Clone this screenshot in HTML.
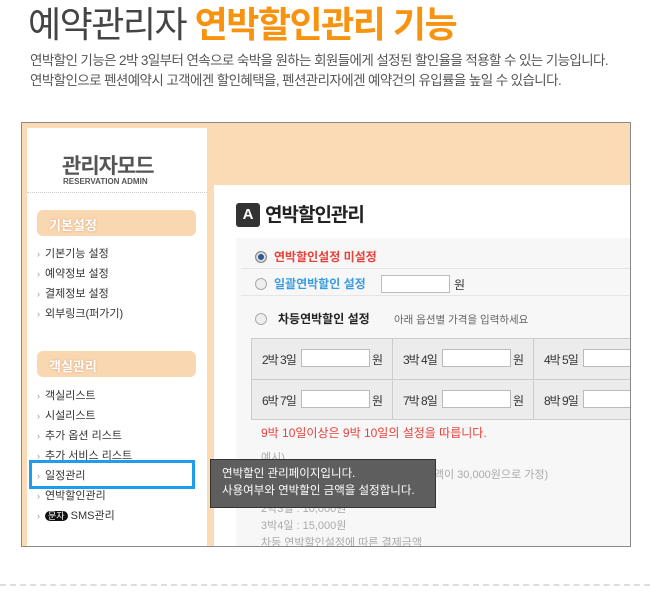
<!DOCTYPE html>
<html><head><meta charset="utf-8"><style>
*{margin:0;padding:0;box-sizing:border-box}
body{width:650px;height:592px;background:#fff;position:relative;overflow:hidden;font-family:"Liberation Sans","Noto Sans CJK KR",sans-serif;}
.a{position:absolute;white-space:nowrap}
.frame{position:absolute;left:21px;top:122px;width:610px;height:425px;border:1px solid #8a8a8a;background:#fbdbb6;overflow:hidden}
.side{position:absolute;left:5px;top:5px;width:180px;height:425px;background:#fff}
.main{position:absolute;left:192px;top:62px;width:420px;height:370px;background:#fff}
.gray{position:absolute;left:22px;top:53px;width:400px;height:320px;background:#f7f7f7}
.pill{position:absolute;left:10px;width:159px;height:26px;border-radius:6px;background:#f9d7b1;color:#fff;font-size:13px;font-weight:bold;padding:5px 0 0 12px;text-shadow:0 0 2px #d9a070}
.m{position:absolute;left:10px;font-size:11px;color:#333}
.m:before{content:"›";color:#999;font-size:9px;margin-right:5px}
.radio{position:absolute;width:12px;height:12px;border-radius:50%;border:1px solid #aaa;background:#eee}
.inp{position:absolute;height:18px;background:#fff;border:1px solid #bbb}
.cell{position:absolute;font-size:12px;color:#333;letter-spacing:-1px}
</style></head><body>
<div class="a" style="left:28px;top:-4px;font-size:36px;color:#444;letter-spacing:-1.5px">예약관리자 <b style="color:#f7930f">연박할인관리 기능</b></div>
<div class="a" style="left:30px;top:51px;font-size:13.5px;color:#555;letter-spacing:-0.6px;line-height:20px">연박할인 기능은 2박 3일부터 연속으로 숙박을 원하는 회원들에게 설정된 할인율을 적용할 수 있는 기능입니다.<br>연박할인으로 펜션예약시 고객에겐 할인혜택을, 펜션관리자에겐 예약건의 유입률을 높일 수 있습니다.</div>
<div class="frame">
 <div class="side">
  <div class="a" style="left:35px;top:22px;font-size:21px;color:#555;font-weight:bold;letter-spacing:-1px">관리자모드</div>
  <div class="a" style="left:36px;top:49px;font-size:8px;color:#555;font-weight:bold">RESERVATION ADMIN</div>
  <div style="position:absolute;left:0;top:64px;width:180px;border-top:1px dotted #ccc"></div>
  <div class="pill" style="top:82px">기본설정</div>
  <div class="m" style="top:117px">기본기능 설정</div>
  <div class="m" style="top:137px">예약정보 설정</div>
  <div class="m" style="top:157px">결제정보 설정</div>
  <div class="m" style="top:177px">외부링크(퍼가기)</div>
  <div class="pill" style="top:223px">객실관리</div>
  <div class="m" style="top:259px">객실리스트</div>
  <div class="m" style="top:279px">시설리스트</div>
  <div class="m" style="top:299px">추가 옵션 리스트</div>
  <div class="m" style="top:319px">추가 서비스 리스트</div>
  <div class="m" style="top:339px">일정관리</div>
  <div class="m" style="top:359px">연박할인관리</div>
  <div class="m" style="top:379px"><span style="background:#111;color:#fff;border-radius:5px;padding:0 3px;font-size:9px">문자</span> SMS관리</div>
 </div>
 <div class="main">
  <div class="a" style="left:22px;top:18px;width:24px;height:24px;background:#333;border-radius:3px;color:#fff;font-weight:bold;font-size:15px;text-align:center;line-height:24px">A</div>
  <div class="a" style="left:51px;top:15px;font-size:19px;font-weight:bold;color:#222;letter-spacing:-1px">연박할인관리</div>
  <div class="gray">
   <div class="radio" style="left:19px;top:13px;background:#2a5a90;border-color:#888;box-shadow:inset 0 0 0 2px #ddd"></div>
   <div class="a" style="left:38px;top:10px;font-size:12px;font-weight:bold;color:#e8413a">연박할인설정 미설정</div>
   <div style="position:absolute;left:5px;top:30px;width:400px;border-top:1px solid #e5e5e5"></div>
   <div class="radio" style="left:19px;top:40px"></div>
   <div class="a" style="left:38px;top:37px;font-size:12px;font-weight:bold;color:#3a9be0">일괄연박할인 설정</div>
   <div class="inp" style="left:145px;top:37px;width:69px"></div>
   <div class="a" style="left:218px;top:38px;font-size:12px;color:#333">원</div>
   <div style="position:absolute;left:5px;top:57px;width:400px;border-top:1px solid #e5e5e5"></div>
   <div class="radio" style="left:19px;top:75px"></div>
   <div class="a" style="left:42px;top:72px;font-size:12px;font-weight:bold;color:#222">차등연박할인 설정</div>
   <div class="a" style="left:158px;top:74px;font-size:10.5px;color:#666">아래 옵션별 가격을 입력하세요</div>
   <div style="position:absolute;left:15px;top:100px;width:400px;height:82px;border:1px solid #ccc;background:#ececec"></div>
   <div style="position:absolute;left:15px;top:141px;width:400px;border-top:1px solid #ccc"></div>
   <div style="position:absolute;left:156px;top:100px;height:82px;border-left:1px solid #ccc"></div>
   <div style="position:absolute;left:297px;top:100px;height:82px;border-left:1px solid #ccc"></div>
   <div class="cell" style="left:26px;top:113px">2박 3일</div><div class="inp" style="left:65px;top:111px;width:69px"></div><div class="cell" style="left:136px;top:113px">원</div>
   <div class="cell" style="left:167px;top:113px">3박 4일</div><div class="inp" style="left:206px;top:111px;width:69px"></div><div class="cell" style="left:277px;top:113px">원</div>
   <div class="cell" style="left:308px;top:113px">4박 5일</div><div class="inp" style="left:347px;top:111px;width:69px"></div>
   <div class="cell" style="left:26px;top:154px">6박 7일</div><div class="inp" style="left:65px;top:152px;width:69px"></div><div class="cell" style="left:136px;top:154px">원</div>
   <div class="cell" style="left:167px;top:154px">7박 8일</div><div class="inp" style="left:206px;top:152px;width:69px"></div><div class="cell" style="left:277px;top:154px">원</div>
   <div class="cell" style="left:308px;top:154px">8박 9일</div><div class="inp" style="left:347px;top:152px;width:69px"></div>
   <div class="a" style="left:25px;top:186px;font-size:12px;color:#e8413a">9박 10일이상은 9박 10일의 설정을 따릅니다.</div>
   <div class="a" style="left:25px;top:212px;font-size:11px;color:#aaa;line-height:17px">예시)<br>3박4일을 예약하는 경우(1일당 예약금액이 30,000원으로 가정)<br>차등연박할인 금액<br>2박3일 : 10,000원<br>3박4일 : 15,000원<br>차등 연박할인설정에 따른 결제금액</div>
  </div>
 </div>
</div>
<div style="position:absolute;left:29px;top:460px;width:166px;height:29px;border:3px solid #1e9cf0"></div>
<div class="a" style="left:210px;top:459px;width:226px;height:49px;background:#5e5e5e;border:1px solid #333;color:#fff;font-size:11.5px;line-height:17px;padding:6px 0 0 11px">연박할인 관리페이지입니다.<br>사용여부와 연박할인 금액을 설정합니다.</div>
<div style="position:absolute;left:0;top:584px;width:650px;border-top:2px dashed #ddd"></div>
</body></html>
